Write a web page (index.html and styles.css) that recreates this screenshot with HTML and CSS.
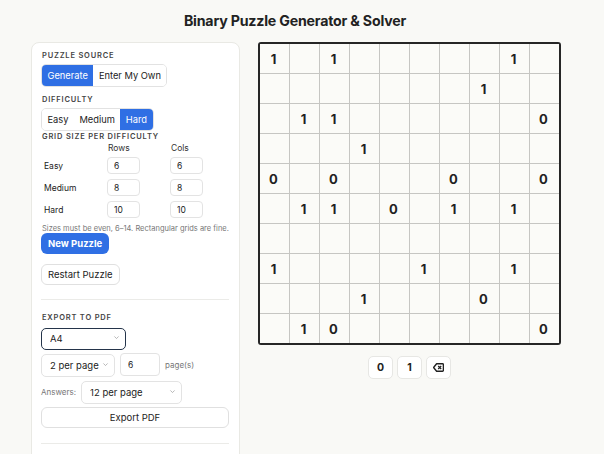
FILE: index.html
```html
<!DOCTYPE html>
<html lang="en">
<head>
  <meta charset="UTF-8">
  <meta name="viewport" content="width=device-width, initial-scale=1.0">
  <title>Binary Puzzle Generator &amp; Solver</title>
  <link rel="stylesheet" href="styles.css">
</head>
<body>
  <div class="page">
    <h1 class="page-title">Binary Puzzle Generator &amp; Solver</h1>

    <div class="layout">
      <!-- Controls -->
      <aside class="panel">
        <div class="label">Puzzle Source</div>
        <div class="segmented">
          <button class="seg active">Generate</button>
          <button class="seg">Enter My Own</button>
        </div>

        <div class="label">Difficulty</div>
        <div class="segmented seg-diff">
          <button class="seg">Easy</button>
          <button class="seg">Medium</button>
          <button class="seg active">Hard</button>
        </div>

        <div class="label">Grid Size per Difficulty</div>
        <div class="size-table">
          <span></span><span class="col-head">Rows</span><span class="col-head">Cols</span>
          <span class="row-name">Easy</span><input class="num" value="6"><input class="num" value="6">
          <span class="row-name">Medium</span><input class="num" value="8"><input class="num" value="8">
          <span class="row-name">Hard</span><input class="num" value="10"><input class="num" value="10">
        </div>
        <p class="hint">Sizes must be even, 6–14. Rectangular grids are fine.</p>

        <button class="btn btn-primary">New Puzzle</button>
        <button class="btn btn-plain">Restart Puzzle</button>

        <hr class="divider">

        <div class="label">Export to PDF</div>
        <div class="select-wrap sel-paper focused">
          <select><option>A4</option></select>
          <svg class="chev" viewBox="0 0 10 6"><path d="M2 1.5l3 3 3-3" fill="none" stroke="#999" stroke-width="1"/></svg>
        </div>
        <div class="export-row">
          <div class="select-wrap sel-per">
            <select><option>2 per page</option></select>
            <svg class="chev" viewBox="0 0 10 6"><path d="M2 1.5l3 3 3-3" fill="none" stroke="#999" stroke-width="1"/></svg>
          </div>
          <input class="num pages" value="6">
          <span class="muted">page(s)</span>
        </div>
        <div class="export-row">
          <span class="muted">Answers:</span>
          <div class="select-wrap sel-ans">
            <select><option>12 per page</option></select>
            <svg class="chev" viewBox="0 0 10 6"><path d="M2 1.5l3 3 3-3" fill="none" stroke="#999" stroke-width="1"/></svg>
          </div>
        </div>
        <button class="btn btn-plain btn-wide">Export PDF</button>

        <hr class="divider divider-end">
      </aside>

      <!-- Board -->
      <main class="board-area">
        <div class="board" id="board"></div>
        <div class="keypad">
          <button class="key">0</button>
          <button class="key">1</button>
          <button class="key">
            <svg width="11" height="9" viewBox="0 0 11 9"><path d="M3.6 0.8h6a0.8 0.8 0 0 1 .8.8v5.8a0.8 0.8 0 0 1-.8.8h-6L0.6 4.5z" fill="none" stroke="#222" stroke-width="1.4" stroke-linejoin="round"/><path d="M5.2 3l3 3M8.2 3l-3 3" stroke="#222" stroke-width="1.3"/></svg>
          </button>
        </div>
      </main>
    </div>
  </div>

  <script>
    const puzzle = [
      "1.1.....1.",
      ".......1..",
      ".11......0",
      "...1......",
      "0.0...0..0",
      ".11.0.1.1.",
      "..........",
      "1....1..1.",
      "...1...0..",
      ".10......0"
    ];

    const board = document.getElementById('board');
    puzzle.forEach(row => {
      row.split('').forEach(ch => {
        const cell = document.createElement('div');
        cell.className = 'cell';
        cell.textContent = ch === '.' ? '' : ch;
        board.appendChild(cell);
      });
    });
  </script>
</body>
</html>
```

FILE: styles.css
```css
body {
  font-family: Inter, "Noto Sans", sans-serif;
  background-color: #f9f9f6;
  color: #222;
  margin: 0;
  padding: 0;
}

.page {
  width: 528px;
  margin-left: 31px;
}

.page-title {
  margin: 0;
  padding-top: 12px;
  height: 30px;
  box-sizing: border-box;
  text-align: center;
  font-size: 14.2px;
  font-weight: 700;
  letter-spacing: -0.2px;
  color: #222;
}

.layout {
  display: flex;
  align-items: flex-start;
  gap: 18px;
  margin-top: 12px;
}

/* Left panel */
.panel {
  flex-shrink: 0;
  width: 188px;
  padding: 8px 10px 30px 9px;
  background-color: #fff;
  border: 1px solid #e9e9e4;
  border-radius: 8px;
  display: flex;
  flex-direction: column;
  align-items: flex-start;
}

.label {
  font-size: 7.5px;
  line-height: 9px;
  font-weight: 600;
  letter-spacing: 0.8px;
  text-transform: uppercase;
  color: #444;
  margin: 0 0 4px 1px;
}

.segmented {
  display: flex;
  border: 1px solid #e2e2e2;
  border-radius: 5px;
  overflow: hidden;
  margin-bottom: 8px;
  background: #fff;
}

.seg-diff {
  margin-bottom: 1px;
}

.seg {
  font-family: inherit;
  font-size: 9.3px;
  color: #222;
  background: #fff;
  border: none;
  padding: 0 5.5px;
  height: 21px;
  cursor: pointer;
}

.seg.active {
  background-color: #2f6fe4;
  color: #fff;
}

.size-table {
  display: grid;
  grid-template-columns: 63px 63px 40px;
  row-gap: 5px;
  align-items: center;
  margin-left: 3px;
}

.col-head {
  font-size: 8.5px;
  line-height: 7px;
  color: #333;
  padding-left: 1px;
}

.row-name {
  font-size: 8.5px;
  color: #222;
}

.num {
  font-family: inherit;
  font-size: 8.5px;
  color: #222;
  width: 33px;
  height: 17px;
  box-sizing: border-box;
  padding: 0 6px;
  border: 1px solid #e3e3e3;
  border-radius: 4px;
  background: #fff;
}

.hint {
  font-size: 7.5px;
  line-height: 8px;
  color: #777;
  margin: 7px 0 0 1px;
  white-space: nowrap;
}

.btn {
  font-family: inherit;
  font-size: 9.5px;
  border-radius: 6px;
  cursor: pointer;
  height: 21px;
  padding: 0 6px;
}

.btn-primary {
  background-color: #2f6fe4;
  color: #fff;
  border: none;
  font-weight: 700;
  padding: 0 7px;
  margin-bottom: 10px;
}

.btn-plain {
  background: #fff;
  color: #222;
  border: 1px solid #e0e0e0;
}

.btn-wide {
  width: 100%;
}

.divider {
  width: 100%;
  border: none;
  border-top: 1px solid #ebebe8;
  margin: 14px 0 13px 0;
}

.divider-end {
  margin-top: 15px;
}

.select-wrap {
  position: relative;
  height: 23px;
}

.select-wrap select {
  appearance: none;
  -webkit-appearance: none;
  font-family: inherit;
  font-size: 9.5px;
  color: #222;
  width: 100%;
  height: 100%;
  padding: 0 8px;
  border: 1px solid #e3e3e3;
  border-radius: 5px;
  background: #fff;
}

.select-wrap .chev {
  position: absolute;
  right: 6px;
  top: 9px;
  width: 7px;
  height: 5px;
}

.sel-paper {
  width: 85px;
  height: 22px;
  margin-bottom: 5px;
}

.focused select {
  border: 1.5px solid #24344a;
}

.sel-per {
  width: 74px;
}

.sel-ans {
  width: 101px;
}

.export-row {
  display: flex;
  align-items: center;
  gap: 5px;
  margin-bottom: 4px;
}

.pages {
  width: 40px;
  height: 23px;
  padding: 0 7px;
}

.muted {
  font-size: 8px;
  color: #777;
}

/* Board */
.board-area {
  flex-shrink: 0;
  display: flex;
  flex-direction: column;
  align-items: center;
}

.board {
  display: grid;
  grid-template-columns: repeat(10, 29px);
  grid-auto-rows: 29px;
  gap: 1px;
  background-color: #c6c6c3;
  border: 2px solid #262626;
  border-radius: 3px;
}

.cell {
  background-color: #fbfbf8;
  display: flex;
  align-items: center;
  justify-content: center;
  font-size: 13px;
  font-weight: 700;
  color: #222;
  padding-right: 2px;
}

.keypad {
  display: flex;
  gap: 4px;
  margin-top: 11px;
}

.key {
  font-family: inherit;
  width: 25px;
  height: 23px;
  font-size: 10.5px;
  font-weight: 700;
  color: #222;
  background: #fff;
  border: 1px solid #e7e7e4;
  border-radius: 5px;
  display: flex;
  align-items: center;
  justify-content: center;
  padding: 0;
}
```
